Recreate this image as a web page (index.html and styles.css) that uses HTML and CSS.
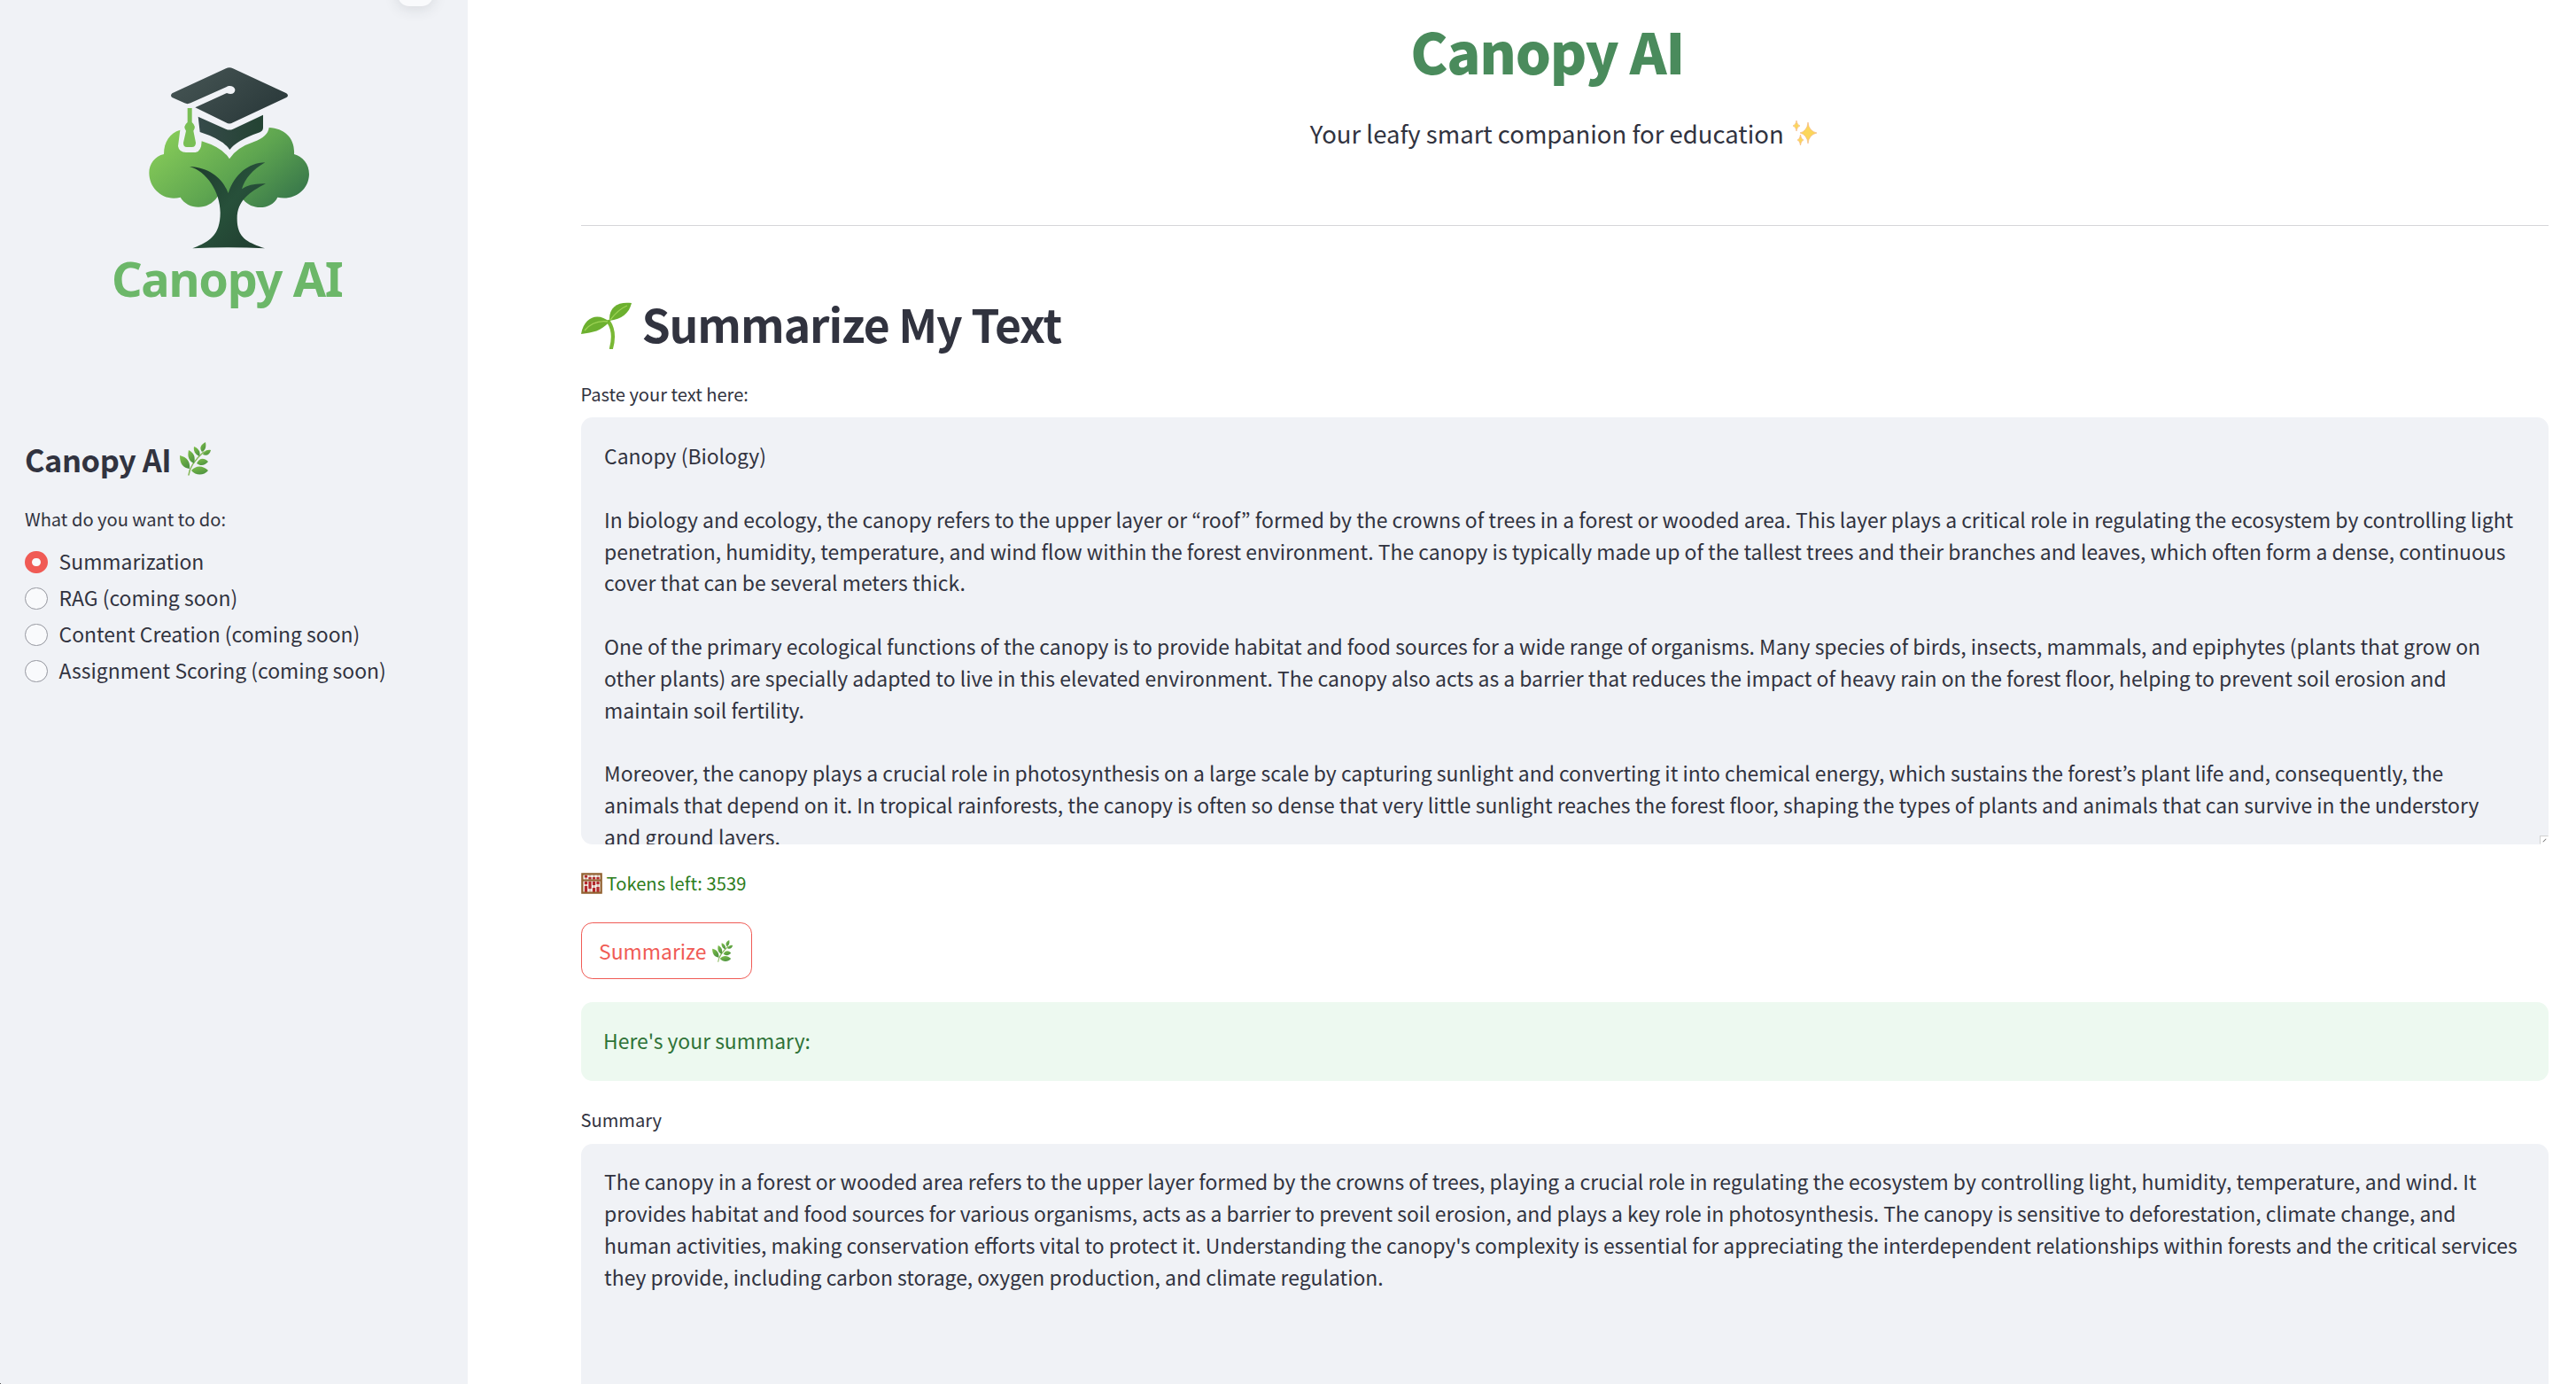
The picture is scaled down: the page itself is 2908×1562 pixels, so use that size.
FILE: index.html
```html
<!DOCTYPE html>
<html lang="en">
<head>
<meta charset="utf-8">
<title>Canopy AI</title>
<link rel="stylesheet" href="styles.css">
</head>
<body>
<svg width="0" height="0" class="defs" aria-hidden="true">
  <defs>
    <linearGradient id="leaf" x1="0" y1="0" x2="0.6" y2="1"><stop offset="0" stop-color="#7fc04a"/><stop offset="1" stop-color="#4f9440"/></linearGradient>
    <linearGradient id="crown" x1="0" y1="0.2" x2="1" y2="0.8"><stop offset="0.05" stop-color="#84c958"/><stop offset="0.55" stop-color="#5ea550"/><stop offset="1" stop-color="#37764a"/></linearGradient>
    <linearGradient id="board" x1="0" y1="0" x2="1" y2="0.6"><stop offset="0" stop-color="#485756"/><stop offset="1" stop-color="#2b3a3b"/></linearGradient>
    <linearGradient id="capbase" x1="0" y1="0" x2="1" y2="0"><stop offset="0" stop-color="#364a4a"/><stop offset="1" stop-color="#234332"/></linearGradient>
    <linearGradient id="trunk" x1="0" y1="0" x2="1" y2="1"><stop offset="0" stop-color="#1d3a2c"/><stop offset="0.5" stop-color="#27503a"/><stop offset="1" stop-color="#1f3b2e"/></linearGradient>
  </defs>
  <symbol id="herb" viewBox="0 0 36 38">
    <path d="M10 37C11 28 18 19 27 11" fill="none" stroke="#87b85a" stroke-width="1.6" stroke-linecap="round"/>
    <g fill="url(#leaf)">
      <path d="M29 0C23 3 22 7 25 11C29 9 30 5 29 0Z"/>
      <path d="M35 9C31 8 27 10 26 14C30 16 34 14 35 9Z"/>
      <path d="M16 5C15 11 18 14 22 16C24 11 21 7 16 5Z"/>
      <path d="M10 9C8 17 11 22 16 24C18 17 16 12 10 9Z"/>
      <path d="M0 15C0 25 4 29 11 30C12 22 8 17 0 15Z"/>
      <path d="M32 22C27 17 22 18 19 24C23 27 28 27 32 22Z"/>
      <path d="M32 32C26 26 18 26 13 32C18 38 27 38 32 32Z"/>
    </g>
  </symbol>
</svg>
<div class="app">
  <aside class="sidebar">
    <div class="collapse"></div>
    <div class="logo">
      <svg class="logo-mark" viewBox="0 0 960 700">
        <path fill="url(#crown)" d="M255 372C255 330 275 300 310 290L303 345Q306 365 330 366H362Q382 364 383 328Q455 350 477 388Q500 350 560 330Q608 312 611 282C665 284 700 320 696 372C725 380 747 405 747 440C745 495 695 530 640 518C620 560 555 565 523 525L477 505L437 515C405 565 335 560 311 518C255 533 205 490 205 435C205 405 225 378 255 372Z"/>
        <path fill="url(#board)" d="M283 166L465 82Q477 75 489 82L670 166Q680 173 670 180L489 265Q477 272 465 265L361 214L468 165C485 172 497 165 496 153C493 139 474 138 466 145L345 199Q335 204 325 199L283 180Q275 173 283 166Z"/>
        <path fill="url(#capbase)" d="M371 245L465 287Q477 292 489 287L591 239V282Q591 293 580 298Q502 325 478 357Q455 322 377 297Z"/>
        <path fill="#79bf55" d="M335 216H350V264Q366 278 355 293L363 333Q363 348 350 348H333Q320 348 321 333L330 293Q318 278 335 264Z"/>
        <path fill="url(#trunk)" d="M342 414C410 417 455 455 473 504C495 440 540 402 598 400C555 425 530 455 519 490Q545 470 600 472C545 500 503 530 503 590C503 655 535 670 597 691Q475 684 352 691C405 670 446 650 446 570C446 500 400 430 342 414Z"/>
      </svg>
      <div class="logo-text"><span>Canopy AI</span></div>
    </div>
    <h2 class="side-title"><span>Canopy AI</span><svg class="herb-lg"><use href="#herb"/></svg></h2>
    <p class="label side-label"><span>What do you want to do:</span></p>
    <ul class="radios">
      <li><i class="radio on"></i><span>Summarization</span></li>
      <li><i class="radio"></i><span>RAG (coming soon)</span></li>
      <li><i class="radio"></i><span>Content Creation (coming soon)</span></li>
      <li><i class="radio"></i><span>Assignment Scoring (coming soon)</span></li>
    </ul>
    <i class="corner"></i>
  </aside>
  <main class="main">
    <h1 class="brand"><span>Canopy AI</span></h1>
    <p class="tagline"><span>Your leafy smart companion for education</span>
      <svg class="sparkles" viewBox="0 0 28 28"><g fill="#fbd65b" stroke="#f3b07a" stroke-width=".6"><path d="M17 2Q18 12 27 14Q18 16 17 26Q16 16 8 14Q16 12 17 2Z"/><path d="M4 0Q4.500 5 8 6Q4.500 7 4 12Q3.500 7 0 6Q3.500 5 4 0Z"/><path d="M8.500 16Q9 21 12 22Q9 23 8.500 28Q8 23 5 22Q8 21 8.500 16Z"/></g></svg>
    </p>
    <hr class="rule">
    <h2 class="heading">
      <svg class="seedling" viewBox="0 0 57 53"><path d="M31 22Q39 34 34 52" fill="none" stroke="#79b834" stroke-width="4.200" stroke-linecap="round"/><path d="M57 1C42-1 31 5 32 21C46 19 54 13 57 1Z" fill="#6cb02f"/><path d="M32 22C20 12 4 15 0 36C14 34 22 33 32 22Z" fill="#6cb02f"/><path d="M33 20Q42 8 52 4M30 22Q14 20 4 32" fill="none" stroke="#9ed455" stroke-width="1.300"/></svg>
      <span>Summarize My Text</span>
    </h2>
    <p class="label input-label"><span>Paste your text here:</span></p>
    <div class="area source"><div class="lines"><span>Canopy (Biology)</span><br><br><span>In biology and ecology, the canopy refers to the upper layer or “roof” formed by the crowns of trees in a forest or wooded area. This layer plays a critical role in regulating the ecosystem by controlling light</span><br><span>penetration, humidity, temperature, and wind flow within the forest environment. The canopy is typically made up of the tallest trees and their branches and leaves, which often form a dense, continuous</span><br><span>cover that can be several meters thick.</span><br><br><span>One of the primary ecological functions of the canopy is to provide habitat and food sources for a wide range of organisms. Many species of birds, insects, mammals, and epiphytes (plants that grow on</span><br><span>other plants) are specially adapted to live in this elevated environment. The canopy also acts as a barrier that reduces the impact of heavy rain on the forest floor, helping to prevent soil erosion and</span><br><span>maintain soil fertility.</span><br><br><span>Moreover, the canopy plays a crucial role in photosynthesis on a large scale by capturing sunlight and converting it into chemical energy, which sustains the forest’s plant life and, consequently, the</span><br><span>animals that depend on it. In tropical rainforests, the canopy is often so dense that very little sunlight reaches the forest floor, shaping the types of plants and animals that can survive in the understory</span><br><span>and ground layers.</span></div><i class="grip"></i></div>
    <p class="label tokens">
      <svg class="abacus" viewBox="0 0 24 24"><path fill="#f1e8e2" d="M1 1h22v22H1z"/><path d="M5.500 2v20M10 2v20M14.500 2v20M19 2v20" stroke="#b98f83" stroke-width=".8"/><path d="M5.500 3v2.500M10 5v2.500M14.500 5v2.500M19 5v2.500M5.500 10v3M5.500 15v7M10 10v8M14.500 10v4M14.500 17v5M19 10v3M19 16v6" stroke="#b3282b" stroke-width="3.200"/><path d="M1.300 1.300h21.400v21.400H1.300zM1 8.500h22" fill="none" stroke="#91602f" stroke-width="2.200"/></svg>
      <span>Tokens left: 3539</span>
    </p>
    <button class="action"><span>Summarize</span><svg class="herb-sm"><use href="#herb"/></svg></button>
    <div class="success"><span>Here's your summary:</span></div>
    <p class="label summary-label"><span>Summary</span></p>
    <div class="area result"><div class="lines"><span>The canopy in a forest or wooded area refers to the upper layer formed by the crowns of trees, playing a crucial role in regulating the ecosystem by controlling light, humidity, temperature, and wind. It</span><br><span>provides habitat and food sources for various organisms, acts as a barrier to prevent soil erosion, and plays a key role in photosynthesis. The canopy is sensitive to deforestation, climate change, and</span><br><span>human activities, making conservation efforts vital to protect it. Understanding the canopy's complexity is essential for appreciating the interdependent relationships within forests and the critical services</span><br><span>they provide, including carbon storage, oxygen production, and climate regulation.</span></div></div>
  </main>
</div>
</body>
</html>
```
FILE: styles.css
```css
* { box-sizing: border-box; margin: 0; padding: 0; }
body {
  width: 2908px; height: 1562px; overflow: hidden; background: #fff; color: #31333f;
  font-family: "Noto Sans CJK KR", "Noto Sans", sans-serif; font-size: 22.925px;
}
.defs { position: absolute; }
svg { display: block; flex: none; }
span { white-space: nowrap; }
.app { display: flex; height: 1562px; overflow: hidden; }
.sidebar { position: relative; width: 528px; flex: none; background: #f0f2f6; padding: 50px 28px 0; }
.collapse { position: absolute; left: 449px; top: -33px; width: 40px; height: 40px; border-radius: 13px; background: #f9fafc; box-shadow: 0 3px 16px rgba(49,51,63,.13); }
.corner { position: absolute; left: 0; bottom: 0; width: 1px; height: 1px; background: #555; }
.logo { display: flex; flex-direction: column; height: 441px; margin-left: 72px; width: 320px; }
.logo-mark { width: 320px; height: 233.300px; }
.logo-text { font-family: "Noto Sans", sans-serif; font-weight: 700; font-size: 54px; line-height: 60px; letter-spacing: -1.300px; color: #6cb769; margin-left: 26px; margin-top: 1px; }
.side-title { display: flex; align-items: center; gap: 10px; height: 54px; font-size: 34.400px; line-height: 54px; font-weight: 700; letter-spacing: -.450px; }
.herb-lg { width: 36px; height: 38px; }
.label { font-size: 20.100px; line-height: 32px; height: 32px; }
.side-label { margin-top: 25px; }
.radios { list-style: none; margin-top: 12px; }
.radios li { display: flex; align-items: center; gap: 13px; height: 41px; }
.radios span { line-height: 36px; padding-bottom: 3px; }
.radio { width: 25.600px; height: 25.600px; border-radius: 50%; border: 1px solid #94969e; background: #f9fafc; flex: none; }
.radio.on { border: 8px solid #f05b55; }
.main { flex: 1; min-width: 0; display: flex; flex-direction: column; align-items: stretch; padding: 0 31px 0 127.500px; }
.main > * { flex-shrink: 0; }
.brand { align-self: center; font-weight: 900; font-size: 63.300px; line-height: 84px; height: 120px; padding-top: 15px; letter-spacing: -1.250px; color: #4a8b5c; margin-right: 39px; }
.tagline { display: flex; justify-content: center; align-items: center; gap: 10px; height: 60px; font-size: 27.500px; padding-right: 2px; }
.sparkles { width: 28px; height: 28px; }
.rule { border: 0; height: 1px; background: #d6d6d9; margin-top: 74px; }
.heading { display: flex; align-items: center; gap: 12px; margin-top: 73px; height: 80px; font-size: 51.600px; font-weight: 700; letter-spacing: -1.100px; }
.heading span { padding-bottom: 7px; }
.seedling { width: 57px; height: 53px; margin-bottom: 1px; }
.input-label { margin-top: 21px; }
.area { position: relative; background: #f0f2f6; border-radius: 12.800px; padding: 25px 26.600px 0; overflow: hidden; }
.lines { line-height: 35.840px; }
.source { height: 482px; margin-top: 10px; padding-top: 26px; }
.grip { position: absolute; right: 0; bottom: 0; width: 10px; height: 10px; border-left: 1px solid #d0d0d0; border-top: 1px solid #d0d0d0; background: linear-gradient(135deg, #fff 0 100%); }
.grip::after { content: ""; position: absolute; left: 2px; top: 4px; width: 5px; height: 1px; background: #777; transform: rotate(-45deg); }
.tokens { display: flex; align-items: center; gap: 5px; color: #2d7d1c; margin-top: 28px; letter-spacing: .080px; }
.abacus { width: 24px; height: 24px; margin-bottom: 1px; }
.action { align-self: flex-start; display: flex; align-items: center; gap: 7px; width: 193px; height: 64px; margin-top: 28px; padding-left: 19.500px; border: 1px solid #f05b55; border-radius: 12.800px; background: #fff; color: #f05b55; font: inherit; }
.action span { padding-bottom: 1px; }
.herb-sm { width: 24px; height: 25px; }
.success { display: flex; align-items: center; height: 89px; margin-top: 26px; padding: 0 25.600px 3px; border-radius: 12.800px; background: #edf9f0; color: #2f7338; }
.summary-label { margin-top: 28px; }
.result { height: 300px; margin-top: 11px; }
```
